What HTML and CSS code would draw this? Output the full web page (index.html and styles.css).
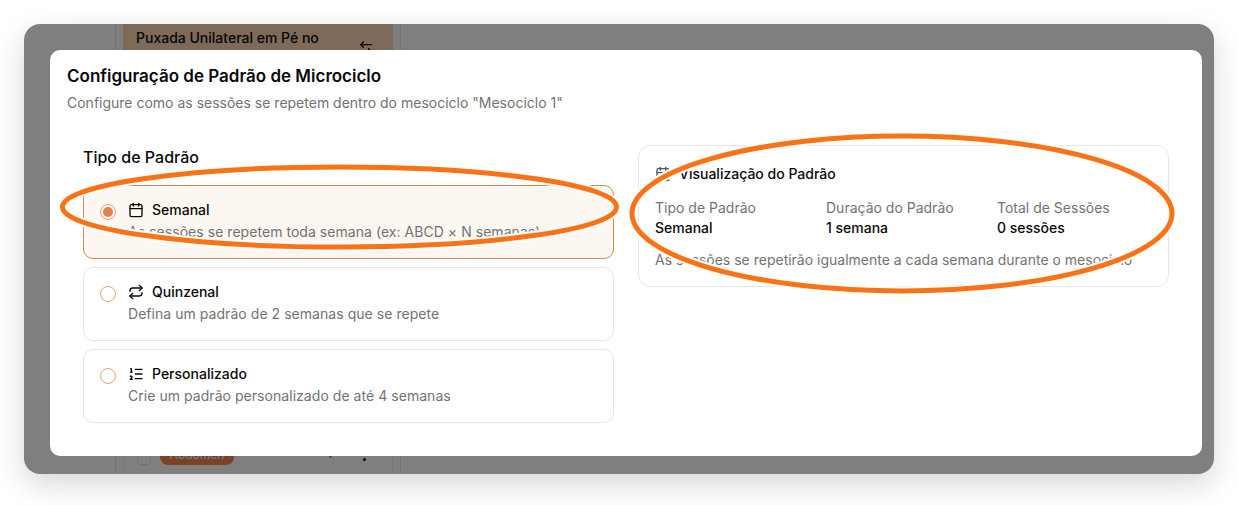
FILE: index.html
```html
<!DOCTYPE html>
<html lang="pt">
<head>
<meta charset="utf-8">
<title>Configuração de Padrão de Microciclo</title>
<link rel="stylesheet" href="styles.css">
</head>
<body>
<div class="window">
  <div class="underlay">
    <div class="column">
      <div class="exercise">
        <span>Puxada Unilateral em Pé no</span>
        <svg class="swap" width="16" height="16" viewBox="0 0 24 24" fill="none" stroke="currentColor" stroke-width="2" stroke-linecap="round" stroke-linejoin="round"><path d="M8 3 4 7l4 4"/><path d="M4 7h16"/><path d="m16 21 4-4-4-4"/><path d="M20 17H4"/></svg>
      </div>
      <div class="exercise-foot">
        <span class="check"></span>
        <span class="pill">Abdômen</span>
        <span class="dots"><i></i><i></i></span>
      </div>
    </div>
  </div>
  <div class="overlay"></div>
  <section class="modal">
    <header class="modal-head">
      <h2>Configuração de Padrão de Microciclo</h2>
      <p>Configure como as sessões se repetem dentro do mesociclo "Mesociclo 1"</p>
    </header>
    <div class="modal-body">
      <div class="left">
        <h3>Tipo de Padrão</h3>
        <div class="options">
          <div class="option selected">
            <span class="radio"><i></i></span>
            <div class="option-text">
              <div class="option-title">
                <svg width="16" height="16" viewBox="0 0 24 24" fill="none" stroke="currentColor" stroke-width="2" stroke-linecap="round" stroke-linejoin="round"><path d="M8 2v4"/><path d="M16 2v4"/><rect x="3" y="4" width="18" height="18" rx="2"/><path d="M3 10h18"/></svg>
                <span>Semanal</span>
              </div>
              <p>As sessões se repetem toda semana (ex: ABCD × N semanas)</p>
            </div>
          </div>
          <div class="option">
            <span class="radio"></span>
            <div class="option-text">
              <div class="option-title">
                <svg width="16" height="16" viewBox="0 0 24 24" fill="none" stroke="currentColor" stroke-width="2" stroke-linecap="round" stroke-linejoin="round"><path d="m17 2 4 4-4 4"/><path d="M3 11v-1a4 4 0 0 1 4-4h14"/><path d="m7 22-4-4 4-4"/><path d="M21 13v1a4 4 0 0 1-4 4H3"/></svg>
                <span>Quinzenal</span>
              </div>
              <p>Defina um padrão de 2 semanas que se repete</p>
            </div>
          </div>
          <div class="option">
            <span class="radio"></span>
            <div class="option-text">
              <div class="option-title">
                <svg width="16" height="16" viewBox="0 0 24 24" fill="none" stroke="currentColor" stroke-width="2" stroke-linecap="round" stroke-linejoin="round"><path d="M11 5h10"/><path d="M11 12h10"/><path d="M11 19h10"/><path d="M4 4h1v5"/><path d="M4 9h2"/><path d="M6.500 20H3.400c0-1 2.600-1.925 2.600-3.500a1.500 1.500 0 0 0-2.600-1.020"/></svg>
                <span>Personalizado</span>
              </div>
              <p>Crie um padrão personalizado de até 4 semanas</p>
            </div>
          </div>
        </div>
      </div>
      <aside class="preview">
        <div class="preview-title">
          <svg width="16" height="16" viewBox="0 0 24 24" fill="none" stroke="currentColor" stroke-width="2" stroke-linecap="round" stroke-linejoin="round"><path d="M8 2v4"/><path d="M16 2v4"/><rect x="3" y="4" width="18" height="18" rx="2"/><path d="M3 10h18"/><path d="M8 14h.01"/><path d="M12 14h.01"/><path d="M16 14h.01"/><path d="M8 18h.01"/><path d="M12 18h.01"/><path d="M16 18h.01"/></svg>
          <span>Visualização do Padrão</span>
        </div>
        <div class="stats">
          <div><dt>Tipo de Padrão</dt><dd>Semanal</dd></div>
          <div><dt>Duração do Padrão</dt><dd>1 semana</dd></div>
          <div><dt>Total de Sessões</dt><dd>0 sessões</dd></div>
        </div>
        <p class="note">As sessões se repetirão igualmente a cada semana durante o mesociclo</p>
      </aside>
    </div>
  </section>
</div>
<svg class="marks" width="1238" height="505" viewBox="0 0 1238 505" fill="none">
  <g class="halo">
    <ellipse cx="339.500" cy="207" rx="277" ry="40"/>
    <ellipse cx="902" cy="213.500" rx="270" ry="77.500"/>
  </g>
  <g class="ink">
    <ellipse cx="339.500" cy="207" rx="277" ry="40"/>
    <ellipse cx="902" cy="213.500" rx="270" ry="77.500"/>
  </g>
</svg>
</body>
</html>
```
FILE: styles.css
```css
* { box-sizing: border-box; }
html, body { margin: 0; padding: 0; }
body {
  width: 1238px;
  height: 505px;
  background: #fff;
  font-family: Inter, "Liberation Sans", sans-serif;
  color: #0a0a0a;
  overflow: hidden;
  position: relative;
  padding: 24px;
}
.window {
  position: relative;
  width: 1190px;
  height: 450px;
  border-radius: 16px;
  background: #fff;
  box-shadow: 0 10px 30px rgba(0, 0, 0, 0.16);
}
.underlay {
  height: 100%;
  padding-left: 91px;
  border-radius: 16px;
  overflow: hidden;
}
.column {
  width: 286px;
  height: 100%;
  border-left: 1px solid #e9e9e9;
  border-right: 1px solid #e9e9e9;
  padding: 0 7px;
  display: flex;
  flex-direction: column;
  justify-content: space-between;
}
.exercise {
  background: #fdd5b1;
  height: 60px;
  padding: 4px 13px;
  font-size: 14px;
  font-weight: 500;
  line-height: 20px;
  display: flex;
  justify-content: space-between;
}
.swap { margin-top: 12px; margin-right: 6px; }
.exercise-foot {
  height: 40px;
  display: flex;
  align-items: flex-end;
  gap: 9px;
  padding: 0 13px 9px;
  border-left: 1px solid #ececec;
  border-right: 1px solid #ececec;
}
.check {
  width: 14px;
  height: 14px;
  border: 1px solid #e4e4e4;
  border-radius: 4px;
}
.pill {
  background: #f4874e;
  color: #fff;
  font-size: 12px;
  height: 20px;
  line-height: 20px;
  width: 74px;
  border-radius: 8px;
  text-align: center;
}
.dots { margin-left: auto; margin-right: 13px; display: flex; gap: 31px; padding-bottom: 4px; }
.dots i { width: 3px; height: 3px; border-radius: 50%; background: #000; display: block; }
.dots i:first-child { margin-top: -3px; background: #999; }
.overlay {
  position: absolute;
  inset: 0;
  border-radius: 16px;
  background: rgba(0, 0, 0, 0.5);
}
.modal {
  position: absolute;
  left: 26px;
  top: 26px;
  width: 1152px;
  height: 406px;
  background: #fff;
  border-radius: 10px;
  padding: 15px 17px;
}
.modal-head h2 {
  margin: 0;
  font-size: 17px;
  font-weight: 600;
  line-height: 22px;
}
.modal-head p {
  margin: 6px 0 0;
  font-size: 14px;
  line-height: 20px;
  color: #737373;
}
.modal-body {
  display: grid;
  grid-template-columns: 531px 531px;
  gap: 24px;
  padding: 0 16px;
  margin-top: 32px;
}
.left h3 {
  margin: 1px 0 0;
  font-size: 16px;
  font-weight: 500;
  line-height: 22px;
}
.options {
  display: flex;
  flex-direction: column;
  gap: 8px;
  margin-top: 17px;
}
.option {
  height: 74px;
  border: 1px solid #e5e5e5;
  border-radius: 10px;
  padding: 14px 16px;
  display: flex;
  gap: 12px;
}
.option.selected {
  background: #fdf7f2;
  border-color: #d08a55;
}
.radio {
  width: 16px;
  height: 16px;
  border: 1px solid #e0a37e;
  border-radius: 50%;
  margin-top: 4px;
  flex: none;
  display: flex;
  align-items: center;
  justify-content: center;
}
.radio i {
  width: 10px;
  height: 10px;
  border-radius: 50%;
  background: #e8804a;
}
.option-title {
  display: flex;
  align-items: center;
  gap: 8px;
  font-size: 14px;
  font-weight: 500;
  line-height: 20px;
}
.option-text p {
  margin: 2px 0 0;
  font-size: 14px;
  line-height: 20px;
  letter-spacing: 0.045px;
  color: #737373;
}
.preview {
  height: 142px;
  border: 1px solid #e8e8e8;
  border-radius: 12px;
  padding: 16px;
}
.preview-title {
  display: flex;
  align-items: center;
  gap: 8px;
  font-size: 14px;
  font-weight: 500;
  line-height: 24px;
}
.preview-title svg { color: #555; }
.stats {
  display: grid;
  grid-template-columns: repeat(3, 171px);
  margin-top: 12px;
}
.stats dt {
  font-size: 14px;
  line-height: 20px;
  color: #737373;
}
.stats dd {
  margin: 0;
  font-size: 14px;
  font-weight: 500;
  line-height: 20px;
}
.note {
  margin: 12px 0 0;
  font-size: 14px;
  line-height: 20px;
  color: #737373;
}
.marks {
  position: absolute;
  left: 0;
  top: 0;
  pointer-events: none;
}
.halo ellipse { stroke: #fff; stroke-width: 9; }
.ink ellipse { stroke: #f97316; stroke-width: 5; }
```
